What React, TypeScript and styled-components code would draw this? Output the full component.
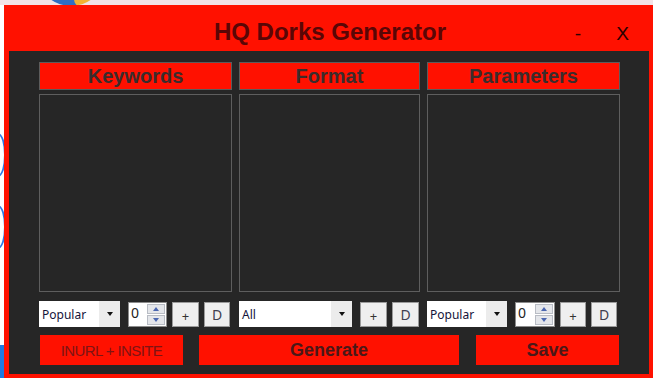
import React from "react";
import styled, { createGlobalStyle } from "styled-components";

const Global = createGlobalStyle`
  html, body { margin: 0; padding: 0; }
  body { background: #f2e3e7; font-family: "Liberation Sans", Arial, sans-serif; overflow: hidden; }
`;

const Desktop = styled.div`
  position: relative;
  width: 653px;
  height: 378px;
  overflow: hidden;
  background: #f2e3e7;
  padding: 5px 0 0 4px;
  box-sizing: border-box;
`;

const LeftStrip = styled.div`
  position: absolute;
  left: 0;
  top: 5px;
  width: 4px;
  height: 373px;
  background: linear-gradient(#ffffff 0 340px, #1f7ae0 340px 100%);
`;

const StripArc = styled.div<{ $top: number }>`
  position: absolute;
  left: -10px;
  top: ${(p) => p.$top}px;
  width: 12px;
  height: 40px;
  border: 2px solid #2c78e4;
  border-radius: 50%;
`;

const BgLogo = styled.div`
  position: absolute;
  left: 42px;
  top: -40px;
  width: 58px;
  height: 46px;
  border-radius: 50%;
  background: radial-gradient(circle at 70% 85%, #f2b233 0 8px, #2f6fc4 9px);
`;

const Window = styled.div`
  position: relative;
  width: 649px;
  height: 373px;
  background: #ff1100;
  box-sizing: border-box;
  padding: 0 4px 4px 5px;
  display: flex;
  flex-direction: column;
`;

const TitleBar = styled.div`
  height: 46px;
  display: flex;
  align-items: center;
  justify-content: center;
  position: relative;
  padding-top: 8px;
  box-sizing: border-box;
`;

const Title = styled.div`
  font-family: "Liberation Sans", Arial, sans-serif;
  font-weight: bold;
  font-size: 24px;
  color: #5a0606;
  margin-left: 2px;
`;

const WinButton = styled.div<{ $right: number }>`
  position: absolute;
  right: ${(p) => p.$right}px;
  top: 18px;
  font-family: "Liberation Sans", Arial, sans-serif;
  font-size: 19px;
  color: #2a0000;
`;

const Panel = styled.div`
  flex: 1;
  background: #262626;
  padding: 11px 0 0 30px;
  box-sizing: border-box;
  display: flex;
  flex-direction: column;
`;

const Columns = styled.div`
  display: flex;
  gap: 7px;
`;

const Column = styled.div<{ $w: number }>`
  width: ${(p) => p.$w}px;
  display: flex;
  flex-direction: column;
`;

const Header = styled.div`
  height: 28px;
  box-sizing: border-box;
  background: #ff1100;
  border: 1px solid #5c5c5c;
  display: flex;
  align-items: center;
  justify-content: center;
  font-family: "Liberation Sans", Arial, sans-serif;
  font-weight: bold;
  font-size: 20px;
  color: #3b2c2c;
`;

const ListBox = styled.div`
  margin-top: 4px;
  height: 198px;
  box-sizing: border-box;
  border: 1px solid #5e5e5e;
  background: #262626;
`;

const Controls = styled.div`
  margin-top: 9px;
  height: 26px;
  display: flex;
  gap: 5px;
  align-items: center;
`;

const Combo = styled.div<{ $w: number }>`
  width: ${(p) => p.$w}px;
  height: 26px;
  margin-right: 3px;
  box-sizing: border-box;
  background: #ffffff;
  display: flex;
  align-items: center;
  font-family: "Noto Sans", "Open Sans", sans-serif;
  font-size: 12px;
  color: #14143a;
`;

const ComboText = styled.span`
  flex: 1;
  padding-left: 3px;
`;

const ComboArrow = styled.div`
  width: 21px;
  height: 100%;
  background: #ececec;
  display: flex;
  align-items: center;
  justify-content: center;
  &::after {
    content: "";
    border-left: 3.5px solid transparent;
    border-right: 3.5px solid transparent;
    border-top: 4px solid #111;
  }
`;

const Numeric = styled.div<{ $w: number }>`
  width: ${(p) => p.$w}px;
  height: 25px;
  box-sizing: border-box;
  border: 1px solid #8c8c8c;
  background: #fff;
  display: flex;
  align-items: stretch;
  font-family: "Noto Sans", "Open Sans", sans-serif;
  font-size: 14px;
  color: #1a1a1a;
`;

const NumText = styled.span`
  flex: 1;
  padding-left: 2px;
  line-height: 20px;
  color: #222;
`;

const Spinner = styled.div`
  width: 18px;
  margin: 1px;
  display: flex;
  flex-direction: column;
  gap: 1px;
`;

const SpinBtn = styled.div<{ $up?: boolean }>`
  flex: 1;
  background: #e4e6ea;
  border: 1px solid #b8bcc4;
  display: flex;
  align-items: center;
  justify-content: center;
  &::after {
    content: "";
    border-left: 3.5px solid transparent;
    border-right: 3.5px solid transparent;
    ${(p) => (p.$up ? "border-bottom: 4px solid #4a66b0;" : "border-top: 4px solid #4a66b0;")}
  }
`;

const SmallButton = styled.div<{ $w: number }>`
  width: ${(p) => p.$w}px;
  height: 25px;
  box-sizing: border-box;
  background: #efefef;
  border: 1px solid #9b9b9b;
  display: flex;
  align-items: center;
  justify-content: center;
  font-family: "Noto Sans", "Open Sans", sans-serif;
  font-size: 14px;
  color: #404050;
`;

const PlusText = styled.span`
  font-size: 13px;
  margin-top: 4px;
  color: #333;
`;

const BottomRow = styled.div`
  margin-top: 8px;
  padding-left: 1px;
  display: flex;
  height: 30px;
`;

const RedButton = styled.div<{ $w: number; $ml: number; $bold?: boolean }>`
  width: ${(p) => p.$w}px;
  margin-left: ${(p) => p.$ml}px;
  height: 30px;
  background: #ff1100;
  display: flex;
  align-items: center;
  justify-content: center;
  font-family: "Liberation Sans", Arial, sans-serif;
  font-size: ${(p) => (p.$bold ? "18px" : "15px")};
  font-weight: ${(p) => (p.$bold ? "bold" : "normal")};
  color: ${(p) => (p.$bold ? "#4a1818" : "#7e1414")};
  letter-spacing: ${(p) => (p.$bold ? "0" : "-0.6px")};
`;

const NumericSpin = ({ w }: { w: number }) => (
  <Numeric $w={w}>
    <NumText>0</NumText>
    <Spinner>
      <SpinBtn $up />
      <SpinBtn />
    </Spinner>
  </Numeric>
);

const ComboBox = ({ w, text }: { w: number; text: string }) => (
  <Combo $w={w}>
    <ComboText>{text}</ComboText>
    <ComboArrow />
  </Combo>
);

export default function App() {
  return (
    <>
      <Global />
      <Desktop>
        <BgLogo />
        <LeftStrip>
          <StripArc $top={128} />
          <StripArc $top={200} />
        </LeftStrip>
        <Window>
          <TitleBar>
            <Title>HQ Dorks Generator</Title>
            <WinButton $right={68}>-</WinButton>
            <WinButton $right={20}>X</WinButton>
          </TitleBar>
          <Panel>
            <Columns>
              <Column $w={193}>
                <Header>Keywords</Header>
                <ListBox />
                <Controls>
                  <ComboBox w={81} text="Popular" />
                  <NumericSpin w={39} />
                  <SmallButton $w={27}><PlusText>+</PlusText></SmallButton>
                  <SmallButton $w={26}>D</SmallButton>
                </Controls>
              </Column>
              <Column $w={181}>
                <Header>Format</Header>
                <ListBox />
                <Controls>
                  <ComboBox w={113} text="All" />
                  <SmallButton $w={27}><PlusText>+</PlusText></SmallButton>
                  <SmallButton $w={27}>D</SmallButton>
                </Controls>
              </Column>
              <Column $w={193}>
                <Header>Parameters</Header>
                <ListBox />
                <Controls>
                  <ComboBox w={80} text="Popular" />
                  <NumericSpin w={40} />
                  <SmallButton $w={26}><PlusText>+</PlusText></SmallButton>
                  <SmallButton $w={26}>D</SmallButton>
                </Controls>
              </Column>
            </Columns>
            <BottomRow>
              <RedButton $w={143} $ml={0}>INURL + INSITE</RedButton>
              <RedButton $w={260} $ml={16} $bold>Generate</RedButton>
              <RedButton $w={143} $ml={17} $bold>Save</RedButton>
            </BottomRow>
          </Panel>
        </Window>
      </Desktop>
    </>
  );
}
